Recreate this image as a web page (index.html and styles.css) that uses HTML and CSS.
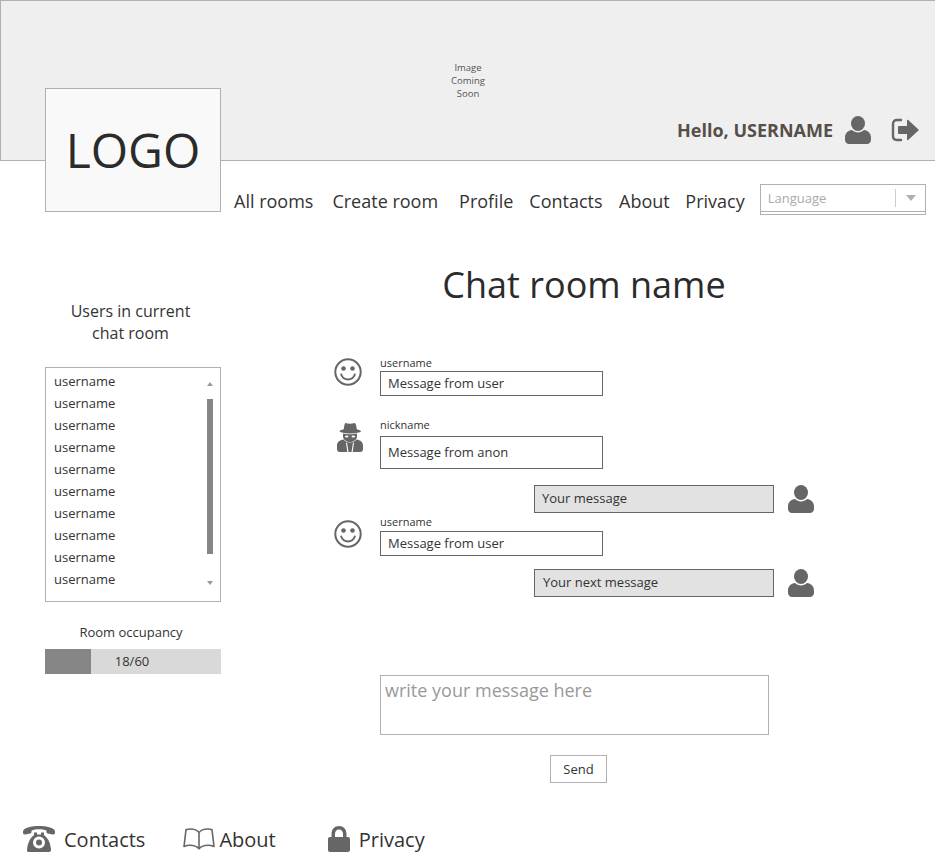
FILE: index.html
```html
<!DOCTYPE html>
<html lang="en">
<head>
<meta charset="utf-8">
<title>Chat room</title>
<link rel="stylesheet" href="styles.css">
</head>
<body>
<svg class="defs" width="0" height="0" aria-hidden="true">
  <symbol id="user" viewBox="0 0 26 28">
    <ellipse cx="13" cy="7.500" rx="7" ry="7.500"/>
    <path d="M7 14c1.600 1.600 3.700 2.500 6 2.500s4.400-.9 6-2.500c4 .6 7 3.200 7 7.500v2.500c0 2.200-1.800 4-4 4H4c-2.200 0-4-1.800-4-4v-2.500C0 17.200 3 14.600 7 14z"/>
  </symbol>
  <symbol id="smile" viewBox="0 0 28 28">
    <circle cx="14" cy="14" r="12.700" fill="none" stroke="currentColor" stroke-width="2"/>
    <circle cx="9.500" cy="10.500" r="2.300"/>
    <circle cx="18.500" cy="10.500" r="2.300"/>
    <path d="M7.200 16.500c1.200 3.200 3.700 5 6.800 5s5.600-1.800 6.800-5" fill="none" stroke="currentColor" stroke-width="2" stroke-linecap="round"/>
  </symbol>
</svg>

<header class="banner">
  <div class="placeholder">Image<br>Coming<br>Soon</div>
  <div class="greeting">
    <span class="hello">Hello, USERNAME</span>
    <svg class="icon-user-lg"><use href="#user"/></svg>
    <svg class="icon-logout" viewBox="0 0 28 24">
      <path d="M10 2H6C3.500 2 2 3.500 2 6v12c0 2.500 1.500 4 4 4h4" fill="none" stroke="currentColor" stroke-width="2.400" stroke-linecap="round"/>
      <path d="M8 8h8V2.500c0-.6.700-.9 1.200-.5L28 12 17.200 22c-.5.400-1.200.1-1.200-.5V16H8c-.6 0-1-.4-1-1V9c0-.6.400-1 1-1z"/>
    </svg>
  </div>
</header>

<div class="topbar">
  <div class="logo">LOGO</div>
  <nav class="nav">
    <a class="nav-rooms">All rooms</a>
    <a class="nav-create">Create room</a>
    <a class="nav-profile">Profile</a>
    <a class="nav-contacts">Contacts</a>
    <a class="nav-about">About</a>
    <a>Privacy</a>
  </nav>
  <div class="language">
    <div class="language-inner">
      <span class="language-label">Language</span>
      <span class="language-caret"></span>
    </div>
  </div>
</div>

<main class="content">
  <aside class="sidebar">
    <h2 class="users-title">Users in current<br>chat room</h2>
    <div class="userlist">
      <ul class="users">
        <li>username</li><li>username</li><li>username</li><li>username</li><li>username</li>
        <li>username</li><li>username</li><li>username</li><li>username</li><li>username</li>
      </ul>
      <div class="scrollbar">
        <span class="arrow-up"></span>
        <span class="thumb"></span>
        <span class="arrow-down"></span>
      </div>
    </div>
    <div class="occupancy-label">Room occupancy</div>
    <div class="occupancy">
      <div class="occupancy-fill"></div>
      <span class="occupancy-text">18/60</span>
    </div>
  </aside>

  <section class="chat">
    <h1 class="room-title">Chat room name</h1>
    <div class="messages">
      <div class="msg msg-first">
        <svg class="avatar-smile"><use href="#smile"/></svg>
        <div class="msg-body">
          <div class="msg-name">username</div>
          <div class="bubble bubble-short">Message from user</div>
        </div>
      </div>
      <div class="msg msg-anon">
        <svg class="avatar-anon" viewBox="0 0 26 30">
          <path d="M8.500 1c1.300.5 3 .8 4.500.8s3.200-.3 4.500-.8c.9 0 1.400 1 1.800 3.300l.5 2.900c2.200.5 4.200 1.300 4.200 2 0 1-5.800 2.200-10.500 2.200S2.500 10.200 2.500 9.200c0-.7 2-1.500 4.200-2l.5-2.900C7.600 2 8.100 1 8.500 1z"/>
          <path d="M6 11.500c2 .5 4.700.8 7 .8s5-.3 7-.8v3c0 2.800-3 5.500-7 5.500s-7-2.700-7-5.500z"/>
          <path d="M6.500 17.500C2.500 18.300 0 20 0 23.500V27c0 2 1 3 3 3h20c2 0 3-1 3-3v-3.500c0-3.500-2.500-5.200-6.500-6-1.500 2-3.800 3-6.500 3s-5-1-6.500-3z"/>
          <ellipse cx="9.700" cy="14.500" rx="1.800" ry="1.100" fill="#fff"/>
          <ellipse cx="16.300" cy="14.500" rx="1.800" ry="1.100" fill="#fff"/>
          <path d="M10 20.500l1.500 9.500h-1.200L9 20.800zM16 20.500L14.500 30h1.200L17 20.800z" fill="#fff"/>
        </svg>
        <div class="msg-body">
          <div class="msg-name">nickname</div>
          <div class="bubble bubble-tall">Message from anon</div>
        </div>
      </div>
      <div class="own own-first">
        <div class="bubble-own">Your message</div>
        <svg class="icon-user-sm"><use href="#user"/></svg>
      </div>
      <div class="msg msg-third">
        <svg class="avatar-smile"><use href="#smile"/></svg>
        <div class="msg-body">
          <div class="msg-name">username</div>
          <div class="bubble bubble-short">Message from user</div>
        </div>
      </div>
      <div class="own own-next">
        <div class="bubble-own bubble-own-next">Your next message</div>
        <svg class="icon-user-sm"><use href="#user"/></svg>
      </div>
    </div>
    <div class="composer">write your message here</div>
    <div class="send-row"><button class="send" type="button">Send</button></div>
  </section>
</main>

<footer class="footer">
  <a class="foot-link foot-contacts">
    <svg class="foot-phone" viewBox="0 0 32 26">
      <path d="M16 0C9 0 3.500 1.300 1 3.500 0 4.500-.3 6 .2 7.500c.3.900 1 1.200 2 1l5-.9c.8-.2 1.300-.7 1.300-1.500V4.500c2-.9 4.800-1.200 7.500-1.200s5.500.3 7.500 1.200v1.600c0 .8.500 1.300 1.300 1.500l5 .9c1 .2 1.700-.1 2-1 .5-1.500.2-3-.8-4C28.500 1.300 23 0 16 0z"/>
      <path fill-rule="evenodd" d="M11 6.500h3v2h4v-2h3v2.700c4 2.500 6.500 7.800 7 14.300.1 1.400-.8 2.500-2.200 2.500H6.200C4.800 26.500 3.900 25.400 4 24c.5-6.500 3-12.300 7-14.800zM16 10.500a6 6 0 1 0 0 12 6 6 0 0 0 0-12zM16 13.500a3 3 0 1 1 0 6 3 3 0 0 1 0-6z"/>
    </svg>
    <span>Contacts</span>
  </a>
  <a class="foot-link foot-about">
    <svg class="foot-book" viewBox="0 0 32 22">
      <path class="book-line" d="M16 4.500C14 2 11 1 7.500 1 5.500 1 4 1.300 3 1.800L1 18.500c1.800-.8 3.800-1.200 6-1.200 3.500 0 6.700 1 9 3.500 2.300-2.500 5.500-3.500 9-3.500 2.200 0 4.200.4 6 1.200L29 1.800C28 1.300 26.500 1 24.500 1 21 1 18 2 16 4.500zM16 4.500v16"/>
    </svg>
    <span>About</span>
  </a>
  <a class="foot-link foot-privacy">
    <svg class="foot-lock" viewBox="0 0 22 26">
      <path d="M11 0c-4.400 0-7.500 3.300-7.500 7.800V11H2c-1.200 0-2 .8-2 2v11c0 1.200.8 2 2 2h18c1.200 0 2-.8 2-2V13c0-1.200-.8-2-2-2h-1.500V7.800C18.500 3.300 15.400 0 11 0zm0 3.400c2.500 0 4 1.800 4 4.600V11H7V8c0-2.800 1.500-4.600 4-4.600z"/>
    </svg>
    <span>Privacy</span>
  </a>
</footer>
</body>
</html>
```
FILE: styles.css
```css
* { box-sizing: border-box; }
html, body { margin: 0; padding: 0; }
body {
  width: 935px;
  height: 858px;
  overflow: hidden;
  background: #fff;
  color: #2b2b2b;
  font-family: "Open Sans", "Liberation Sans", sans-serif;
}
.defs { display: block; height: 0; }
svg { display: block; flex: none; fill: #666; color: #666; }

/* banner */
.banner {
  height: 161px;
  padding-top: 60px;
  background: #efefef;
  border: 1px solid #b0b0b0;
  border-right: 0;
}
.placeholder {
  text-align: center;
  font-size: 9.500px;
  line-height: 13px;
  color: #555;
}
.greeting {
  display: flex;
  justify-content: flex-end;
  align-items: center;
  margin-top: 15px;
  padding-right: 16px;
  height: 30px;
}
.hello { font-size: 18px; font-weight: 700; color: #564f49; }
.icon-user-lg { width: 26px; height: 28px; margin-left: 12px; }
.icon-logout { width: 28px; height: 24px; margin-left: 20px; }

/* logo + nav */
.topbar {
  display: flex;
  align-items: flex-start;
  margin-top: -73px;
  padding-left: 45px;
}
.logo {
  width: 176px;
  height: 124px;
  padding-bottom: 2px;
  background: #f9f9f9;
  border: 1px solid #b0b0b0;
  display: flex;
  align-items: center;
  justify-content: center;
  font-size: 48px;
  color: #2b2b2b;
  position: relative;
}
.nav {
  display: flex;
  margin-top: 100px;
  margin-left: 13px;
  font-size: 18px;
  line-height: 26px;
  color: #333;
}
.nav-rooms { margin-right: 19px; }
.nav-create { margin-right: 21px; }
.nav-profile { margin-right: 16px; }
.nav-contacts { margin-right: 16.500px; }
.nav-about { margin-right: 15.500px; }
.language {
  width: 166px;
  height: 31px;
  margin-top: 96px;
  margin-left: 15px;
  border: 1px solid #b0b0b0;
}
.language-inner {
  display: flex;
  align-items: center;
  justify-content: space-between;
  height: 27px;
  padding-left: 7px;
  border-bottom: 1px solid #b0b0b0;
}
.language-label { font-size: 13px; color: #aaa; }
.language-caret {
  position: relative;
  width: 30px;
  height: 18px;
  border-left: 1px solid #ccc;
}
.language-caret::after {
  content: "";
  position: absolute;
  left: 10px;
  top: 6px;
  border: 5px solid transparent;
  border-top: 6px solid #b0b0b0;
  border-bottom: 0;
}

/* layout */
.content { display: flex; align-items: flex-start; padding-left: 45px; }

/* sidebar */
.sidebar { width: 176px; margin-top: 85px; }
.users-title {
  margin: 0 0 23px;
  width: 171px;
  text-align: center;
  font-size: 16px;
  font-weight: 400;
  line-height: 22px;
  color: #333;
}
.userlist {
  display: flex;
  justify-content: space-between;
  height: 235px;
  border: 1px solid #b0b0b0;
}
.users {
  list-style: none;
  margin: 2px 0 0;
  padding: 0 0 0 8px;
  font-size: 13px;
  line-height: 22px;
  color: #333;
}
.scrollbar {
  width: 16px;
  margin-right: 2px;
  display: flex;
  flex-direction: column;
  align-items: center;
}
.arrow-up, .arrow-down { width: 0; height: 0; border: 3.500px solid transparent; }
.arrow-up { border-top: 0; border-bottom: 4px solid #999; margin: 14px 0 0; }
.arrow-down { border-bottom: 0; border-top: 4px solid #999; margin-top: 27px; }
.thumb { width: 6px; height: 155px; margin-top: 13px; background: #868686; }
.occupancy-label {
  margin-top: 22px;
  width: 172px;
  text-align: center;
  font-size: 13px;
  line-height: 17px;
  color: #333;
}
.occupancy {
  position: relative;
  height: 25px;
  margin-top: 8px;
  background: #d9d9d9;
  text-align: center;
  font-size: 13px;
  line-height: 25px;
  color: #333;
}
.occupancy-fill { position: absolute; left: 0; top: 0; width: 46px; height: 100%; background: #868686; }
.occupancy-text { position: relative; left: -1px; }

/* chat */
.chat { width: 482px; margin-left: 112px; }
.room-title {
  margin: 45px 0 0;
  padding-left: 20px;
  text-align: center;
  font-size: 36px;
  font-weight: 400;
  line-height: 50px;
  color: #2b2b2b;
}
.messages { height: 320px; }
.msg { display: flex; }
.msg-first { margin-top: 45px; }
.msg-anon { margin-top: 21px; }
.msg-third { margin-top: 1px; }
.avatar-smile { width: 28px; height: 28px; margin-left: 1px; margin-top: 3px; }
.msg-third .avatar-smile { margin-top: 6px; }
.avatar-anon { width: 26px; height: 30px; margin-left: 4px; margin-top: 5px; margin-right: -1px; }
.msg-body { margin-left: 18px; }
.msg-name { font-size: 11px; line-height: 16px; color: #333; }
.msg-anon .msg-name { margin-bottom: 3px; }
.msg-third .msg-name { margin-bottom: 1px; }
.bubble {
  width: 223px;
  border: 1px solid #666;
  padding: 0 0 2px 7px;
  font-size: 13px;
  color: #333;
  display: flex;
  align-items: center;
}
.bubble-short { height: 25px; }
.bubble-tall { height: 33px; }
.own { display: flex; align-items: center; margin-left: 201px; }
.own-first { margin-top: 16px; }
.own-next { margin-top: 13px; }
.bubble-own {
  width: 240px;
  height: 28px;
  padding-left: 7px;
  background: #e2e2e2;
  border: 1px solid #666;
  font-size: 13px;
  line-height: 24px;
  color: #333;
}
.bubble-own-next { padding-left: 8px; }
.icon-user-sm { width: 26px; height: 28px; margin-left: 14px; }
.composer {
  width: 389px;
  height: 60px;
  margin-left: 47px;
  padding: 2px 4px;
  border: 1px solid #b0b0b0;
  font-size: 18px;
  line-height: 25px;
  color: #999;
}
.send-row { margin-top: 20px; margin-left: 217px; }
.send {
  display: block;
  width: 57px;
  height: 28px;
  padding: 0;
  background: #fff;
  border: 1px solid #b0b0b0;
  font-family: inherit;
  font-size: 13px;
  color: #333;
}

/* footer */
.footer { display: flex; align-items: center; height: 40px; margin-top: 36px; padding-left: 23px; }
.foot-link { display: flex; align-items: center; font-size: 20px; color: #333; }
.foot-phone { width: 32px; height: 26px; }
.foot-contacts span { margin-left: 9px; }
.foot-about { margin-left: 38px; }
.foot-book { width: 32px; height: 22px; }
.book-line { fill: none; stroke: #666; stroke-width: 1.600; stroke-linejoin: round; }
.foot-about span { margin-left: 4px; }
.foot-privacy { margin-left: 52px; }
.foot-lock { width: 22px; height: 26px; }
.foot-privacy span { margin-left: 9px; }
```
